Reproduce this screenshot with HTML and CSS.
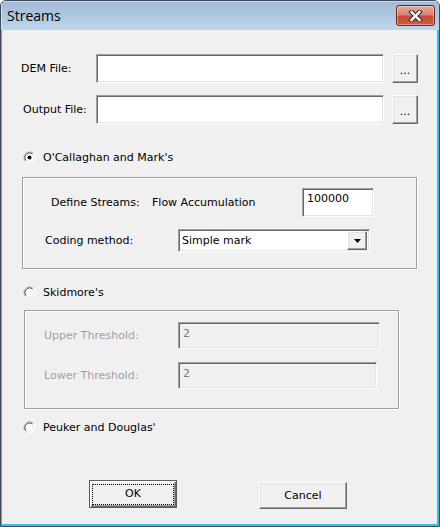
FILE: index.html
```html
<!DOCTYPE html>
<html>
<head>
<meta charset="utf-8">
<link rel="stylesheet" href="styles.css">
</head>
<body>
<div class="window">
  <div class="titlebar">
    <span class="title">Streams</span>
    <div class="close">
      <svg width="15" height="12" viewBox="0 0 15 12">
        <path d="M3.5 2 L11.5 10 M11.5 2 L3.5 10" stroke="#3b3b3b" stroke-width="4.6" stroke-linecap="square"/>
        <path d="M3.5 2 L11.5 10 M11.5 2 L3.5 10" stroke="#ffffff" stroke-width="2.4" stroke-linecap="square"/>
      </svg>
    </div>
  </div>
  <div class="client">
    <div class="file-row first">
      <span class="file-label">DEM File:</span>
      <div class="edit file-edit"></div>
      <div class="btn browse">...</div>
    </div>
    <div class="file-row">
      <span class="file-label out">Output File:</span>
      <div class="edit file-edit"></div>
      <div class="btn browse">...</div>
    </div>

    <div class="radio-row r1">
      <svg class="radio" width="13" height="13" viewBox="0 0 13 13">
        <circle cx="6.5" cy="6.5" r="6" fill="#fff"/>
        <path d="M2.61 10.39 A5.5 5.5 0 0 1 10.39 2.61" fill="none" stroke="#9a9a9a"/>
        <path d="M3.32 9.68 A4.5 4.5 0 0 1 9.68 3.32" fill="none" stroke="#505050"/>
        <path d="M10.39 2.61 A5.5 5.5 0 0 1 2.61 10.39" fill="none" stroke="#ffffff"/>
        <path d="M9.68 3.32 A4.5 4.5 0 0 1 3.32 9.68" fill="none" stroke="#e3e3e3"/>
        <circle cx="6.5" cy="6.5" r="2" fill="#000"/>
      </svg>
      <span class="radio-label">O'Callaghan and Mark's</span>
    </div>
    <div class="group g1">
      <div class="g1-row">
        <span class="ds-label">Define Streams:</span>
        <span class="fa-label">Flow Accumulation</span>
        <div class="edit acc-edit">100000</div>
      </div>
      <div class="g1-row code-row">
        <span class="code-label">Coding method:</span>
        <div class="edit combo">
          <span class="combo-text">Simple mark</span>
          <div class="btn drop">
            <svg width="7" height="4" viewBox="0 0 7 4"><path d="M0 0 H7 L3.5 4 Z" fill="#000"/></svg>
          </div>
        </div>
      </div>
    </div>

    <div class="radio-row r2">
      <svg class="radio" width="13" height="13" viewBox="0 0 13 13">
        <circle cx="6.5" cy="6.5" r="6" fill="#fff"/>
        <path d="M2.61 10.39 A5.5 5.5 0 0 1 10.39 2.61" fill="none" stroke="#9a9a9a"/>
        <path d="M3.32 9.68 A4.5 4.5 0 0 1 9.68 3.32" fill="none" stroke="#505050"/>
        <path d="M10.39 2.61 A5.5 5.5 0 0 1 2.61 10.39" fill="none" stroke="#ffffff"/>
        <path d="M9.68 3.32 A4.5 4.5 0 0 1 3.32 9.68" fill="none" stroke="#e3e3e3"/>
      </svg>
      <span class="radio-label">Skidmore's</span>
    </div>
    <div class="group g2">
      <div class="g2-row">
        <span class="thr-label">Upper Threshold:</span>
        <div class="edit disabled upper">2</div>
      </div>
      <div class="g2-row lower-row">
        <span class="thr-label">Lower Threshold:</span>
        <div class="edit disabled lower">2</div>
      </div>
    </div>

    <div class="radio-row r3">
      <svg class="radio" width="13" height="13" viewBox="0 0 13 13">
        <circle cx="6.5" cy="6.5" r="6" fill="#fff"/>
        <path d="M2.61 10.39 A5.5 5.5 0 0 1 10.39 2.61" fill="none" stroke="#9a9a9a"/>
        <path d="M3.32 9.68 A4.5 4.5 0 0 1 9.68 3.32" fill="none" stroke="#505050"/>
        <path d="M10.39 2.61 A5.5 5.5 0 0 1 2.61 10.39" fill="none" stroke="#ffffff"/>
        <path d="M9.68 3.32 A4.5 4.5 0 0 1 3.32 9.68" fill="none" stroke="#e3e3e3"/>
      </svg>
      <span class="radio-label">Peuker and Douglas'</span>
    </div>

    <div class="buttons">
      <div class="btn push default"><span class="focus">OK</span></div>
      <div class="btn push cancel">Cancel</div>
    </div>
  </div>
</div>
</body>
</html>
```

FILE: styles.css
```css
html, body {
  margin: 0;
  padding: 0;
  background: #ffffff;
}

body {
  font-family: "DejaVu Sans", Verdana, sans-serif;
  font-size: 11px;
  color: #000;
}

.window {
  width: 440px;
  height: 527px;
  box-sizing: border-box;
  border: 1px solid #3d4b5c;
  border-radius: 6px 6px 0 0;
  display: flex;
  flex-direction: column;
  overflow: hidden;
  background: #bcd4ec;
}

.titlebar {
  height: 29px;
  flex: none;
  display: flex;
  justify-content: space-between;
  align-items: flex-start;
  padding: 0 4px 0 6px;
  background: linear-gradient(to bottom, #a3bbd6 0%, #aec6e0 50%, #bfd6ee 100%);
  box-shadow: inset 1px 1px 0 rgba(255,255,255,0.45);
}

.title {
  font-family: "Open Sans", "Noto Sans", sans-serif;
  font-size: 14px;
  line-height: 29px;
  color: #000;
}

.close {
  margin-top: 4px;
  width: 39px;
  height: 21px;
  box-sizing: border-box;
  border: 1px solid #6e2a22;
  border-radius: 3px;
  background: linear-gradient(to bottom, #e6a999 0%, #d88573 45%, #c74a35 55%, #cf5c45 100%);
  box-shadow: inset 0 0 0 1px rgba(255,255,255,0.35);
  display: flex;
  align-items: center;
  justify-content: center;
}

.client {
  flex: 1;
  background: #f0f0f0;
  border-left: 1px solid #4aa8dc;
  border-right: 2px solid #3fb5e4;
  border-bottom: 2px solid #3cbde8;
  display: flex;
  flex-direction: column;
  align-items: flex-start;
}

/* edits */
.edit {
  box-sizing: border-box;
  background: #fff;
  border-top: 1px solid #a0a0a0;
  border-left: 1px solid #a0a0a0;
  border-right: 1px solid #ffffff;
  border-bottom: 1px solid #ffffff;
  box-shadow: inset 1px 1px 0 #696969, inset -1px -1px 0 #e3e3e3;
}

.btn {
  box-sizing: border-box;
  background: #f0f0f0;
  border-top: 1px solid #ffffff;
  border-left: 1px solid #ffffff;
  border-right: 1px solid #696969;
  border-bottom: 1px solid #696969;
  box-shadow: inset -1px -1px 0 #a0a0a0, inset 1px 1px 0 #e3e3e3;
  display: flex;
  align-items: center;
  justify-content: center;
}

/* file rows */
.file-row {
  display: flex;
  align-items: center;
  height: 29px;
  padding-left: 19px;
  margin-top: 12px;
}
.file-row.first {
  margin-top: 24px;
}
.file-label {
  width: 75px;
  box-sizing: border-box;
}
.file-label.out {
  padding-left: 2px;
}
.file-edit {
  width: 288px;
  height: 29px;
}
.browse {
  width: 26px;
  height: 29px;
  margin-left: 8px;
  padding-top: 4px;
}

/* radios */
.radio-row {
  display: flex;
  align-items: center;
  height: 13px;
  padding-left: 21px;
}
.radio {
  display: block;
  flex: none;
}
.radio-label {
  margin-left: 7px;
  line-height: 13px;
}
.r1 { margin-top: 27px; }
.r2 { margin-top: 17px; }
.r3 { margin-top: 12px; }

/* groups */
.group {
  box-sizing: border-box;
  border: 1px solid #a0a0a0;
  box-shadow: inset 1px 1px 0 #ffffff, 1px 1px 0 #ffffff;
  display: flex;
  flex-direction: column;
}
.g1 {
  margin-top: 13px;
  margin-left: 20px;
  width: 395px;
  height: 92px;
  padding: 10px 0 0 28px;
}
.g1-row {
  display: flex;
  align-items: center;
}
.ds-label {
  width: 101px;
}
.fa-label {
  width: 150px;
}
.acc-edit {
  width: 72px;
  height: 29px;
  padding: 3px 0 0 4px;
  line-height: 13px;
}
.code-row {
  margin-top: 12px;
  margin-left: -6px;
}
.code-label {
  width: 133px;
}
.combo {
  width: 192px;
  height: 23px;
  display: flex;
  align-items: center;
  justify-content: space-between;
  padding: 2px 2px 2px 3px;
}
.combo-text {
  line-height: 17px;
}
.drop {
  width: 20px;
  height: 19px;
  padding-top: 1px;
}

.g2 {
  margin-top: 11px;
  margin-left: 22px;
  width: 375px;
  height: 99px;
  padding: 11px 0 0 19px;
}
.g2-row {
  display: flex;
  align-items: center;
}
.lower-row {
  margin-top: 13px;
}
.thr-label {
  width: 134px;
  color: #a0a0a0;
}
.edit.disabled {
  background: #f0f0f0;
  height: 27px;
  color: #7a7a7a;
  padding: 4px 0 0 4px;
  line-height: 13px;
}
.upper { width: 202px; }
.lower { width: 199px; }

/* push buttons */
.buttons {
  display: flex;
  align-items: flex-start;
  margin-top: 46px;
  padding-left: 87px;
}
.push {
  width: 88px;
  height: 27px;
}
.push.default {
  height: 28px;
  border: 1px solid #5a5a5a;
  box-shadow: inset 1px 1px 0 #ffffff, inset -1px -1px 0 #696969, inset -2px -2px 0 #a0a0a0;
}
.focus {
  display: flex;
  align-items: center;
  justify-content: center;
  width: 80px;
  height: 18px;
  border: 1px dotted #000;
  padding-bottom: 1px;
}
.cancel {
  margin-left: 82px;
  margin-top: 2px;
}
```
